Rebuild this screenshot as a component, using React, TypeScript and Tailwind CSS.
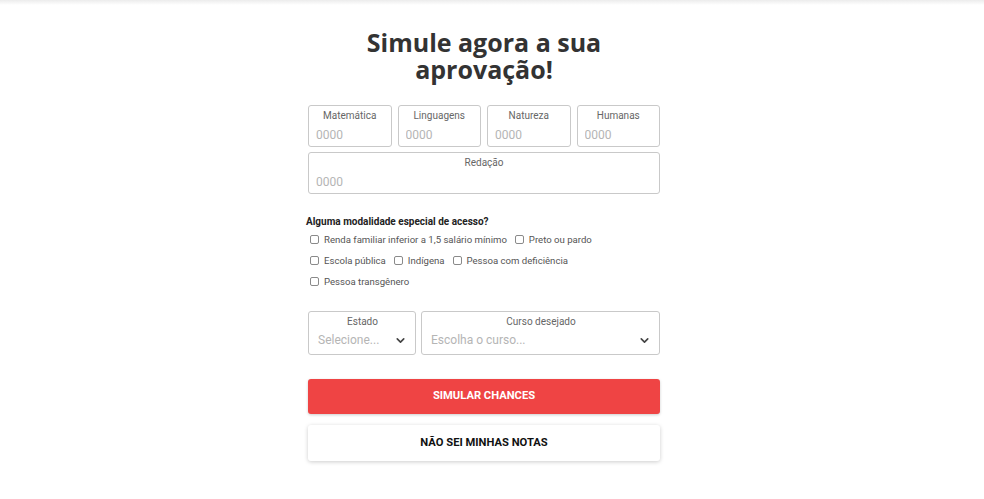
import { ChevronDown } from "lucide-react";

const scores = ["Matemática", "Linguagens", "Natureza", "Humanas"];

const ScoreBox = ({ label, className = "" }: { label: string; className?: string }) => (
  <div className={`h-[42px] rounded-[3px] border border-[#c9c9c9] bg-white px-[7px] pt-[4px] ${className}`}>
    <div className="text-center text-[10px] leading-[12px] text-[#666]">{label}</div>
    <input
      placeholder="0000"
      className="mt-[3px] w-full bg-transparent text-[12px] leading-[16px] text-[#333] outline-none placeholder:text-[#b5b5b5]"
    />
  </div>
);

const Check = ({ label }: { label: string }) => (
  <label className="flex items-center gap-[5px] text-[9.6px] leading-[13px] text-[#555]">
    <span className="inline-block h-[9px] w-[9px] rounded-[2px] border border-[#8a8a8a] bg-white"></span>
    {label}
  </label>
);

const SelectBox = ({ label, placeholder, className = "" }: { label: string; placeholder: string; className?: string }) => (
  <div className={`h-[44px] rounded-[3px] border border-[#c9c9c9] bg-white pl-[9px] pr-[8px] pt-[4px] ${className}`}>
    <div className="text-center text-[10px] leading-[12px] text-[#666]">{label}</div>
    <div className="mt-[4px] flex items-center justify-between">
      <span className="text-[12px] leading-[16px] text-[#b5b5b5]">{placeholder}</span>
      <ChevronDown className="h-[13px] w-[13px] text-[#444]" strokeWidth={3} />
    </div>
  </div>
);

export default function App() {
  return (
    <div className="min-h-[499px] bg-white font-['Roboto',sans-serif]">
      <div className="h-[5px] bg-gradient-to-b from-[#ececec] to-white"></div>
      <div className="flex justify-center pr-[16px]">
        <div className="w-[352px]">
          <h1 className="mt-[24px] text-center font-['Open_Sans',sans-serif] text-[25px] font-bold leading-[27px] text-[#333]">
            <span className="block">Simule agora a sua</span>
            <span className="block">aprovação!</span>
          </h1>

          <div className="mt-[22px] grid grid-cols-4 gap-[6px]">
            {scores.map((s) => (
              <ScoreBox key={s} label={s} />
            ))}
          </div>
          <ScoreBox label="Redação" className="mt-[5px]" />

          <div className="mt-[20px] -ml-[2px] text-[10px] font-bold text-[#222]">Alguma modalidade especial de acesso?</div>
          <div className="mt-[4px] flex flex-col gap-[8px] pl-[2px]">
            <div className="flex gap-[8px]">
              <Check label="Renda familiar inferior a 1,5 salário mínimo" />
              <Check label="Preto ou pardo" />
            </div>
            <div className="flex gap-[8px]">
              <Check label="Escola pública" />
              <Check label="Indígena" />
              <Check label="Pessoa com deficiência" />
            </div>
            <div className="flex gap-[8px]">
              <Check label="Pessoa transgênero" />
            </div>
          </div>

          <div className="mt-[23px] flex gap-[5px]">
            <SelectBox label="Estado" placeholder="Selecione..." className="w-[108px]" />
            <SelectBox label="Curso desejado" placeholder="Escolha o curso..." className="flex-1" />
          </div>

          <button className="mt-[24px] h-[35px] w-full rounded-[3px] bg-[#ef4444] text-[11.2px] font-bold text-white shadow-[0_1px_3px_rgba(0,0,0,0.2)]">
            SIMULAR CHANCES
          </button>
          <button className="mt-[11px] h-[36px] w-full rounded-[3px] bg-white text-[11.2px] font-bold text-[#111] shadow-[0_1px_4px_rgba(0,0,0,0.2)]">
            NÃO SEI MINHAS NOTAS
          </button>
        </div>
      </div>
    </div>
  );
}
